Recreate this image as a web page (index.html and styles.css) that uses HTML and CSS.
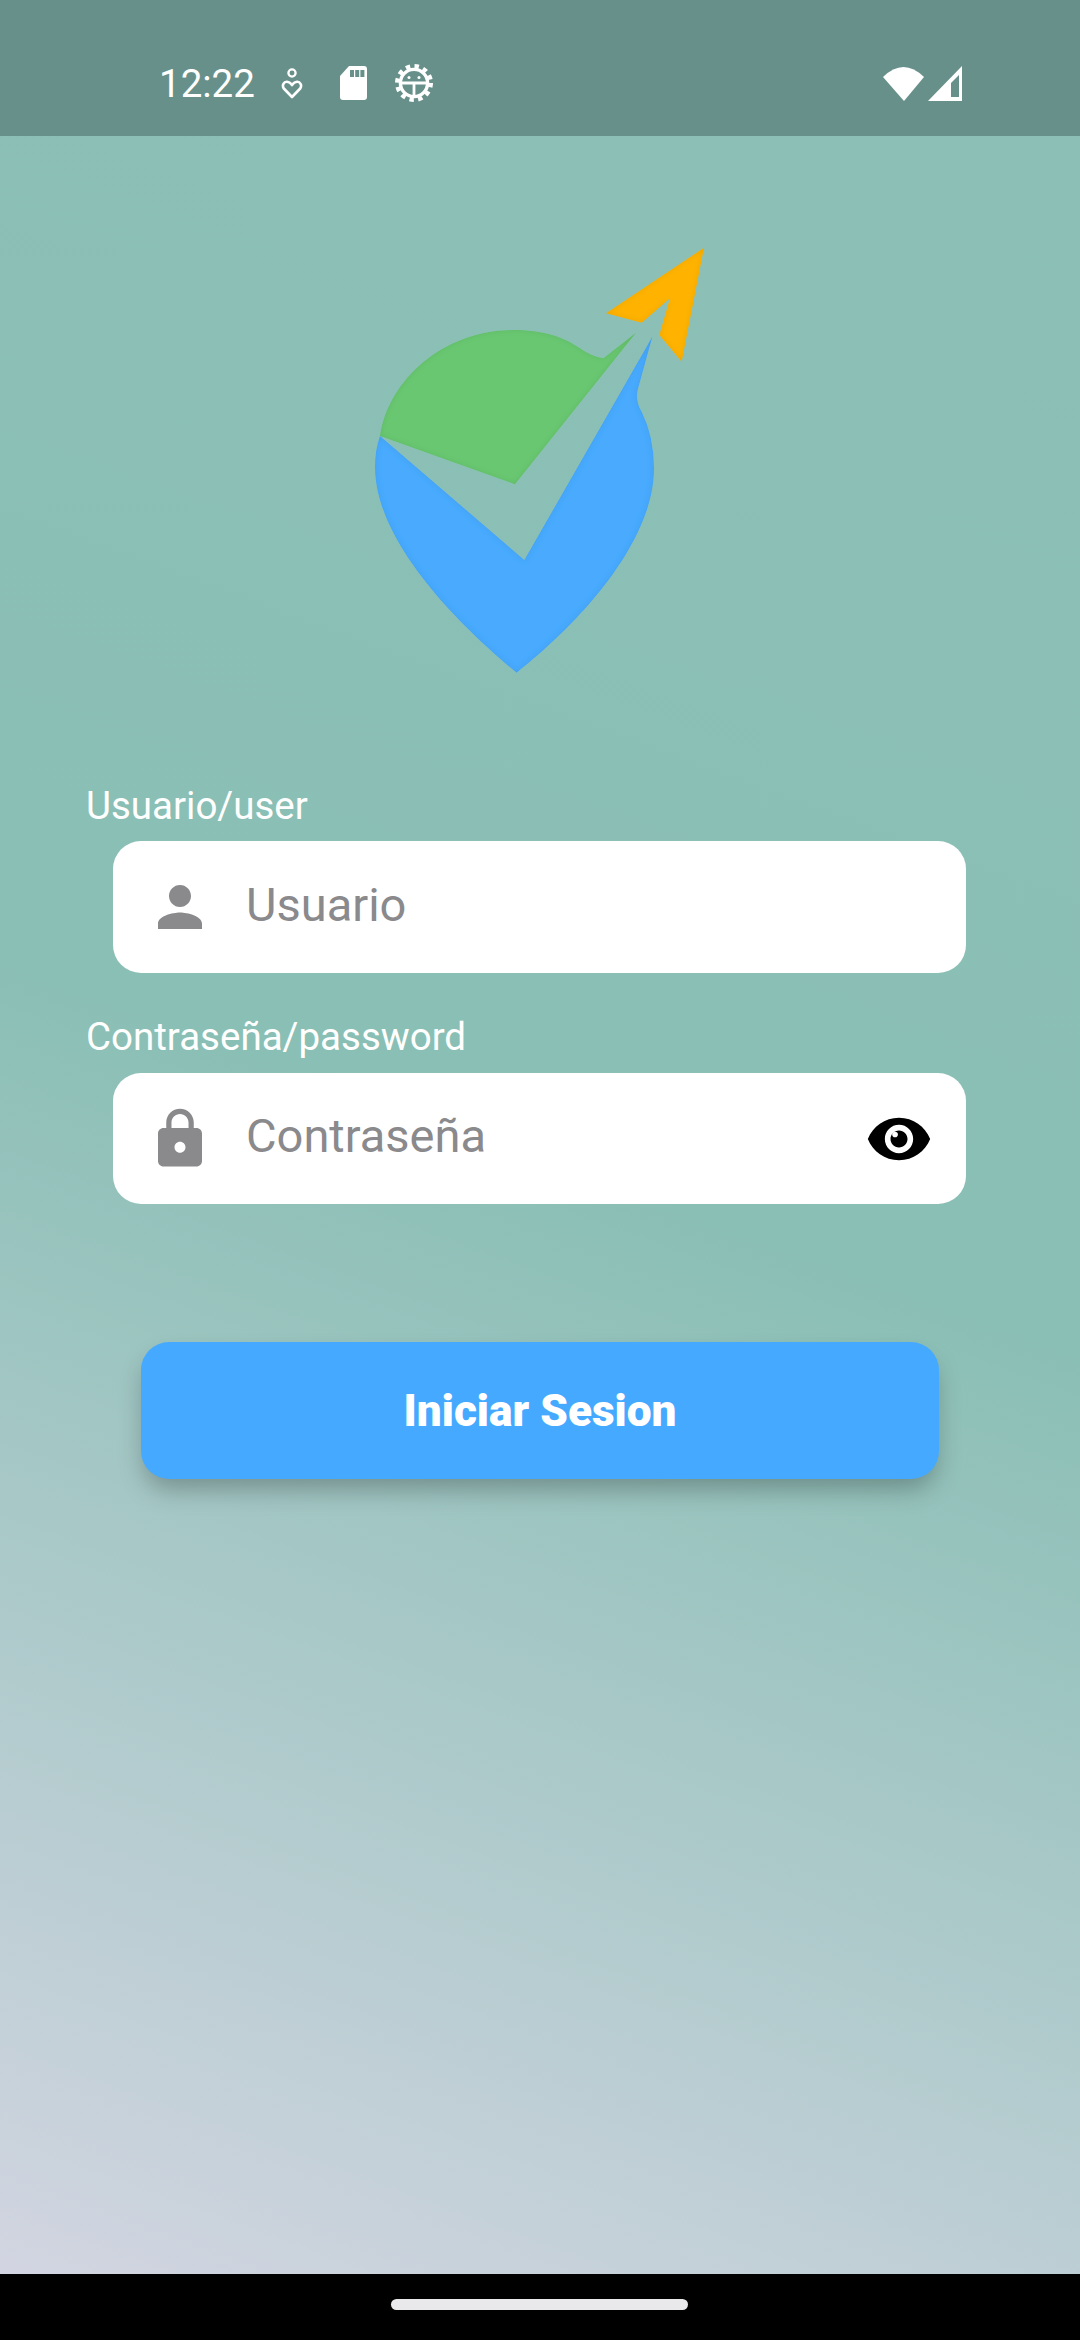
FILE: index.html
```html
<!DOCTYPE html>
<html lang="es">
<head>
    <meta charset="UTF-8">
    <meta name="viewport" content="width=device-width, initial-scale=1.0">
    <title>Iniciar Sesion</title>
    <link rel="stylesheet" href="styles.css">
</head>
<body>
    <div class="screen">
        <!-- Barra de estado -->
        <div class="status-bar">
            <span class="time">12:22</span>
            <svg class="st-heart" width="22" height="31" viewBox="0 0 22 31" fill="none" stroke="#fff">
                <circle cx="11" cy="5" r="3.6" stroke-width="2.3"></circle>
                <path d="M11 29 L2.8 20.5 C0.6 17 3 13.6 6 13.8 C8.3 14 10 15.5 11 17.2 C12 15.5 13.7 14 16 13.8 C19 13.6 21.4 17 19.2 20.5 Z" stroke-width="2.6" stroke-linejoin="round"></path>
            </svg>
            <svg class="st-sd" width="27" height="34" viewBox="0 0 27 34" fill="#fff">
                <path fill-rule="evenodd" d="M9 0 H24 a3 3 0 0 1 3 3 V31 a3 3 0 0 1 -3 3 H3 a3 3 0 0 1 -3 -3 V10 Z M10 4 V11 H14 V4 Z M15.2 4 V11 H19.2 V4 Z M20.4 4 V11 H24.4 V4 Z"></path>
            </svg>
            <svg class="st-gear" width="38" height="38" viewBox="0 0 38 38" fill="none" stroke="#fff">
                <circle cx="19" cy="19" r="16.8" stroke-width="4.4" stroke-dasharray="4.4 4.4"></circle>
                <circle cx="19" cy="19" r="13.6" stroke-width="3.4"></circle>
                <path d="M6 19 H32 M19 19 V32" stroke-width="2.8"></path>
                <circle cx="14" cy="13.5" r="1.5" fill="#fff" stroke="none"></circle>
                <circle cx="24" cy="13.5" r="1.5" fill="#fff" stroke="none"></circle>
            </svg>
            <div class="status-right">
                <svg width="41" height="34" viewBox="0 0 41 34" fill="#fff">
                    <path d="M0 10 Q20.5 -10 41 10 L21 34 Z"></path>
                </svg>
                <svg width="34" height="35" viewBox="0 0 34 35" fill="#fff">
                    <path fill-rule="evenodd" d="M0 35 L34 0 V35 Z M23 31 H31 V9 L23 17 Z"></path>
                </svg>
            </div>
        </div>

        <div class="content">
            <!-- Logo -->
            <svg class="logo" width="400" height="480" viewBox="0 0 1200 1440">
                <defs>
                    <filter id="innerEdge" x="-5%" y="-5%" width="110%" height="110%">
                        <feGaussianBlur in="SourceAlpha" stdDeviation="10" result="blur"></feGaussianBlur>
                        <feComposite in="SourceAlpha" in2="blur" operator="arithmetic" k2="1" k3="-1" result="edge"></feComposite>
                        <feFlood flood-color="#000" flood-opacity="0.16"></feFlood>
                        <feComposite in2="edge" operator="in" result="shade"></feComposite>
                        <feMerge>
                            <feMergeNode in="SourceGraphic"></feMergeNode>
                            <feMergeNode in="shade"></feMergeNode>
                        </feMerge>
                    </filter>
                </defs>
                <path filter="url(#innerEdge)" fill="#48aafe" d="M120 648 L553 1020 L937 350 L893 510 Q886 545 905 575 Q942 650 942 745 C942 960 730 1200 530 1358 C 345 1205 105 960 105 740 Q105 690 120 648 Z"></path>
                <path filter="url(#innerEdge)" fill="#69c771" d="M120 648 C145 480 310 330 520 330 C610 330 670 350 720 385 Q755 410 790 415 L888 338 L525 793 Z"></path>
                <path filter="url(#innerEdge)" fill="#ffb300" d="M1092 83 L798 280 L905 308 L990 235 L958 345 L1025 425 Z"></path>
            </svg>

            <!-- Formulario -->
            <form class="login-form">
                <label class="field-label">Usuario/user</label>
                <div class="input-box">
                    <svg class="input-icon" width="66" height="66" viewBox="0 0 24 24" fill="currentColor">
                        <path d="M12 12c2.21 0 4-1.79 4-4s-1.79-4-4-4-4 1.79-4 4 1.79 4 4 4zm0 2c-2.67 0-8 1.34-8 4v2h16v-2c0-2.66-5.33-4-8-4z"></path>
                    </svg>
                    <span class="placeholder">Usuario</span>
                </div>

                <label class="field-label second">Contraseña/password</label>
                <div class="input-box">
                    <svg class="input-icon" width="66" height="66" viewBox="0 0 24 24" fill="currentColor">
                        <path d="M18 8h-1V6c0-2.76-2.24-5-5-5S7 3.24 7 6v2H6c-1.1 0-2 .9-2 2v10c0 1.1.9 2 2 2h12c1.1 0 2-.9 2-2V10c0-1.1-.9-2-2-2zm-6 9c-1.1 0-2-.9-2-2s.9-2 2-2 2 .9 2 2-.9 2-2 2zm3.1-9H8.9V6c0-1.71 1.39-3.1 3.1-3.1 1.71 0 3.1 1.39 3.1 3.1v2z"></path>
                    </svg>
                    <span class="placeholder">Contraseña</span>
                    <svg class="eye-icon" width="68" height="68" viewBox="0 0 24 24" fill="#000">
                        <path d="M12 4.5C7 4.5 2.73 7.61 1 12c1.73 4.39 6 7.5 11 7.5s9.27-3.11 11-7.5c-1.73-4.39-6-7.5-11-7.5zM12 17c-2.76 0-5-2.24-5-5s2.24-5 5-5 5 2.24 5 5-2.24 5-5 5zm0-8c-1.66 0-3 1.34-3 3s1.34 3 3 3 3-1.34 3-3-1.34-3-3-3z"></path>
                        <circle cx="10.6" cy="10.4" r="1" fill="#fff"></circle>
                    </svg>
                </div>

                <button type="button" class="login-btn">Iniciar Sesion</button>
            </form>
        </div>

        <!-- Barra de navegacion -->
        <div class="nav-bar">
            <div class="nav-handle"></div>
        </div>
    </div>
</body>
</html>
```

FILE: styles.css
```css
body {
    margin: 0;
    font-family: Roboto, "Noto Sans", sans-serif;
    background-color: #000;
}
.screen {
    width: 1080px;
    height: 2340px;
    display: flex;
    flex-direction: column;
    overflow: hidden;
}
.status-bar {
    height: 136px;
    flex-shrink: 0;
    box-sizing: border-box;
    padding: 30px 118px 0 159px;
    display: flex;
    align-items: center;
    background-color: #68908a;
    color: #fff;
}
.time {
    font-size: 38.5px;
    line-height: 44px;
    margin-top: 2px;
}
.st-heart {
    margin-left: 26px;
}
.st-sd {
    margin-left: 37px;
}
.st-gear {
    margin-left: 28px;
    overflow: visible;
}
.status-right {
    margin-left: auto;
    display: flex;
    align-items: flex-end;
    gap: 4px;
}
.content {
    flex: 1;
    background: linear-gradient(200deg, #8cc0b6 0%, #8abfb5 48%, #d2d5e1 100%);
}
.logo {
    display: block;
    margin: 84px 0 0 340px;
}
.login-form {
    margin: 85px 0 0 86px;
}
.field-label {
    display: block;
    font-size: 38.5px;
    line-height: 42px;
    color: #fff;
}
.field-label.second {
    margin-top: 43px;
}
.input-box {
    width: 853px;
    height: 132px;
    margin: 14px 0 0 27px;
    box-sizing: border-box;
    padding: 0 33px 0 34px;
    display: flex;
    align-items: center;
    background-color: #fff;
    border-radius: 28px;
    color: #8a898c;
}
.second + .input-box {
    height: 131px;
    margin-top: 15px;
}
.placeholder {
    font-size: 47px;
    line-height: 52px;
    margin: 0 0 5px 33px;
}
.eye-icon {
    margin-left: auto;
}
.login-btn {
    display: block;
    width: 798px;
    height: 137px;
    margin: 138px 0 0 55px;
    background-color: #45aaff;
    color: #fff;
    border: none;
    border-radius: 28px;
    font-family: Roboto, sans-serif;
    font-size: 44.2px;
    font-weight: 900;
    box-shadow: 0 14px 26px -4px rgba(0, 0, 0, 0.28);
}
.nav-bar {
    height: 66px;
    flex-shrink: 0;
    background-color: #000;
    display: flex;
    align-items: center;
    justify-content: center;
}
.nav-handle {
    width: 297px;
    height: 11px;
    margin-top: -5px;
    margin-left: -1px;
    background-color: #e9e8ea;
    border-radius: 6px;
}
```
